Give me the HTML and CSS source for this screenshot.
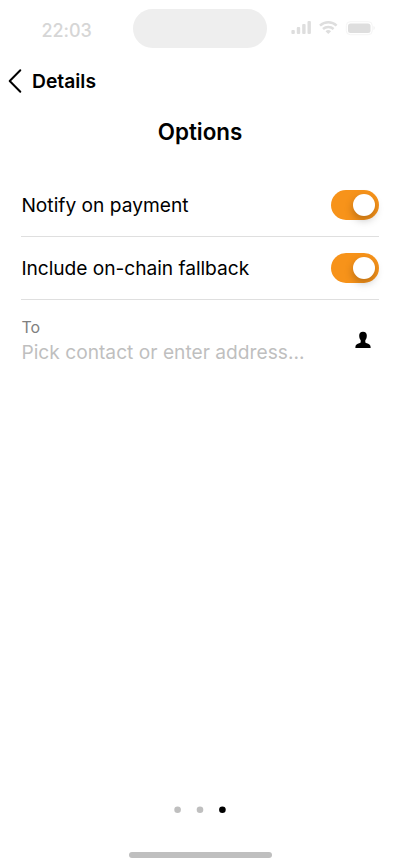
FILE: index.html
```html
<!DOCTYPE html>
<html lang="en">
<head>
<meta charset="utf-8">
<title>Options</title>
<link rel="stylesheet" href="styles.css">
</head>
<body>
<main class="screen">
  <div class="status">
    <span class="time">22:03</span>
    <span class="island"></span>
    <svg class="indicators" width="84" height="16" viewBox="0 0 84 16">
      <g fill="#dedede">
        <rect x="0.4" y="10" width="3.4" height="4" rx="1"/>
        <rect x="5.8" y="7" width="3.4" height="7" rx="1"/>
        <rect x="11.2" y="4" width="3.4" height="10" rx="1"/>
        <rect x="16.5" y="1" width="3.4" height="13" rx="1"/>
        <rect x="57" y="3.500" width="22.5" height="9.500" rx="2.5"/>
      </g>
      <g fill="none" stroke="#dedede" stroke-width="2.5">
        <path d="M29 5.7a12 12 0 0 1 16.6 0"/>
        <path d="M32 9a7.7 7.7 0 0 1 10.600 0"/>
      </g>
      <path d="M34.500 11.300a4.200 4.200 0 0 1 5.600 0L37.300 14.100Z" fill="#dedede"/>
      <rect x="55.300" y="1.700" width="26" height="13" rx="4" fill="none" stroke="#f5f5f5"/>
      <path d="M82.500 6v4c1.700-.7 1.700-3.300 0-4Z" fill="#f1f1f1"/>
    </svg>
  </div>
  <nav class="back">
    <svg width="14" height="26" viewBox="0 0 14 26"><path d="M12.300 2.300 1.700 13 12.300 23.700" fill="none" stroke="#000" stroke-width="2" stroke-linecap="round" stroke-linejoin="round"/></svg>
    <span>Details</span>
  </nav>
  <h1 class="title">Options</h1>
  <section class="list">
    <div class="row"><span class="name">Notify on payment</span><span class="toggle"><i class="knob"></i></span></div>
    <div class="row"><span class="name wide">Include on-chain fallback</span><span class="toggle"><i class="knob"></i></span></div>
    <div class="recipient">
      <div class="field">
        <span class="label">To</span>
        <span class="placeholder">Pick contact or enter address...</span>
      </div>
      <svg class="person" width="16" height="18" viewBox="0 -.5 16 18"><path d="M8 .3C5.500.3 4.200 1.600 4.200 4.100c0 2 .5 3.500 1.500 4.700v1.700c0 .6-.6.900-1.500 1.200C2.300 12.300.4 13 .4 15.400v1.200h15.200v-1.200c0-2.400-1.900-3.100-3.800-3.700-.9-.3-1.500-.6-1.500-1.200V8.800c1-1.200 1.500-2.700 1.500-4.700C11.800 1.600 10.500.3 8 .3Z"/></svg>
    </div>
  </section>
  <svg class="dots" width="52" height="8" viewBox="0 0 52 8">
    <g fill="#bfbfbf"><circle cx="3.600" cy="3.700" r="3.300"/><circle cx="26" cy="3.700" r="3.300"/></g>
    <circle cx="48.400" cy="3.700" r="3.300"/>
  </svg>
  <div class="home"></div>
</main>
</body>
</html>
```
FILE: styles.css
```css
* { box-sizing: border-box; }
body { margin: 0; background: #fff; color: #000; font-family: Inter, sans-serif; }
.screen { width: 400px; height: 866px; display: flex; flex-direction: column; overflow: hidden; }
.status { height: 60px; display: flex; align-items: flex-start; }
.time { width: 133px; padding: 20px 0 0 41.5px; font-size: 18px; line-height: 22px; font-weight: 550; letter-spacing: -.05px; color: #d6d6d6; }
.island { width: 134px; height: 39px; margin-top: 9px; border-radius: 20px; background: #eee; }
.indicators { margin: 20px 0 0 24px; }
.back { height: 42px; display: flex; align-items: center; padding-left: 8px; gap: 10px; font-size: 19.3px; font-weight: 600; }
.title { margin: 16px 0 0; text-align: center; font-size: 22.4px; line-height: 28px; font-weight: 600; }
.list { margin: 28px 21px 0; }
.row { height: 63px; display: flex; align-items: center; justify-content: space-between; border-bottom: 1px solid #dfdfdf; font-size: 19.2px; }
.name { padding-left: .4px; }
.wide { letter-spacing: -.05px; }
.toggle { width: 48px; height: 30px; padding: 4px; border-radius: 15px; background: #f7931a; display: flex; justify-content: flex-end; }
.knob { width: 22px; height: 22px; border-radius: 50%; background: #fff; box-shadow: 0 4px 8px rgba(0, 0, 0, .25); }
.recipient { display: flex; justify-content: space-between; padding: 16px 8px 0 .4px; }
.field { display: flex; flex-direction: column; }
.label { font-size: 16px; line-height: 22px; color: #808080; }
.placeholder { font-size: 19.2px; line-height: 28px; color: #bfbfbf; }
.person { margin-top: 15px; }
.dots { margin: auto auto 0; }
.home { width: 143px; height: 6px; border-radius: 3px; background: #bfbfbf; margin: 38px 0 8px 129px; }
```
